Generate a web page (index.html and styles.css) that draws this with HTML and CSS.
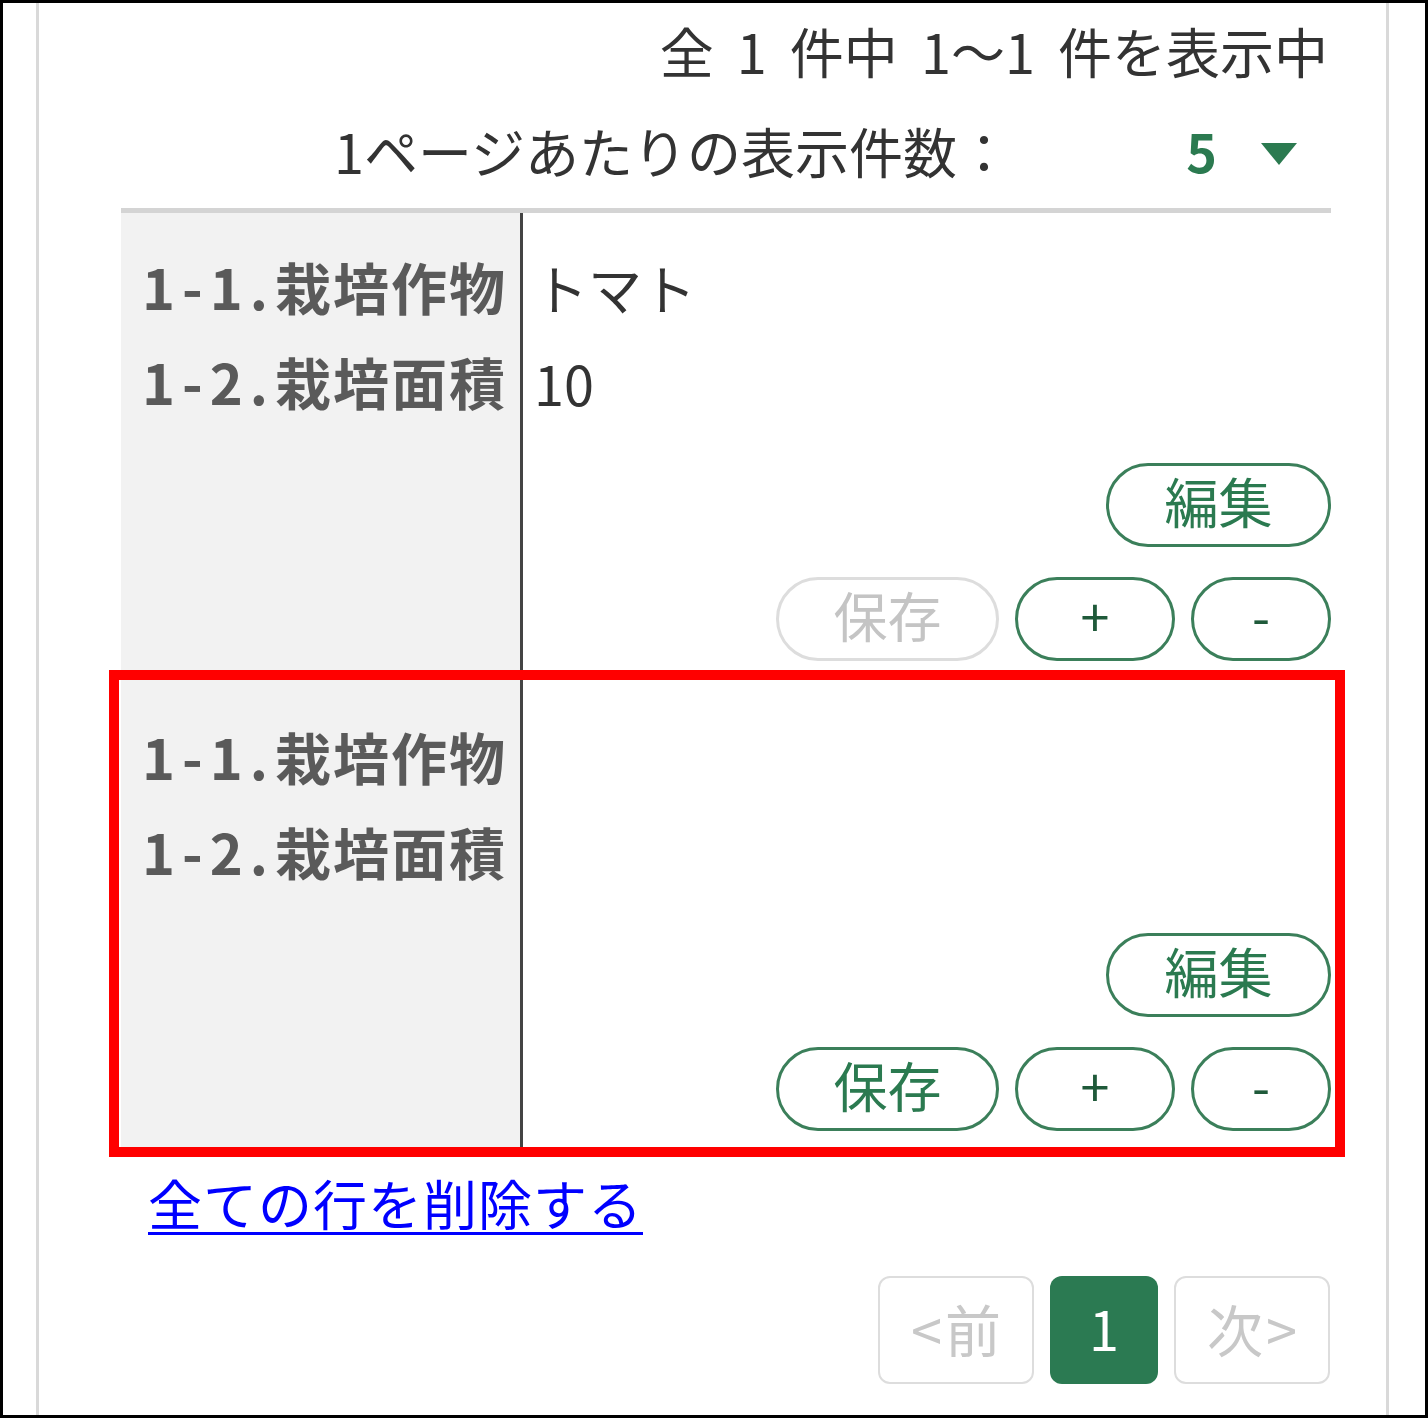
FILE: index.html
```html
<!DOCTYPE html>
<html lang="ja">
<head>
<meta charset="utf-8">
<title>栽培情報</title>
<link rel="stylesheet" href="styles.css">
</head>
<body>
<div class="frame">
  <div class="gutter"></div>
  <div class="panel">
    <div class="count">全 1 件中 1～1 件を表示中</div>
    <div class="perpage">
      <span class="perpage-label">1ページあたりの表示件数：</span>
      <div class="select">
        <span class="select-value">5</span>
        <span class="select-arrow"></span>
      </div>
    </div>
    <div class="table">
      <div class="row">
        <div class="labels">
          <div class="line"><span class="num">1-1.</span>栽培作物</div>
          <div class="line"><span class="num">1-2.</span>栽培面積</div>
        </div>
        <div class="values">
          <div class="line">トマト</div>
          <div class="line">10</div>
          <div class="actions">
            <div class="btn-row"><button class="btn btn-edit">編集</button></div>
            <div class="btn-row">
              <button class="btn btn-save is-disabled">保存</button>
              <button class="btn btn-add">+</button>
              <button class="btn btn-remove">-</button>
            </div>
          </div>
        </div>
      </div>
      <div class="row row-highlight">
        <div class="labels">
          <div class="line"><span class="num">1-1.</span>栽培作物</div>
          <div class="line"><span class="num">1-2.</span>栽培面積</div>
        </div>
        <div class="values">
          <div class="line"></div>
          <div class="line"></div>
          <div class="actions">
            <div class="btn-row"><button class="btn btn-edit">編集</button></div>
            <div class="btn-row">
              <button class="btn btn-save">保存</button>
              <button class="btn btn-add">+</button>
              <button class="btn btn-remove">-</button>
            </div>
          </div>
        </div>
        <div class="highlight"></div>
      </div>
    </div>
    <div class="delete-all"><a href="#">全ての行を削除する</a></div>
    <div class="pager">
      <span class="page page-nav">&lt;前</span>
      <span class="page page-current">1</span>
      <span class="page page-nav">次&gt;</span>
    </div>
  </div>
</div>
</body>
</html>
```

FILE: styles.css
```css
* { box-sizing: border-box; }

html, body {
  margin: 0;
  padding: 0;
  background: #ffffff;
}

body {
  font-family: "Noto Sans CJK JP", "Noto Sans", sans-serif;
  color: #333333;
}

.frame {
  width: 1428px;
  height: 1418px;
  border: 3px solid #000000;
  display: flex;
  overflow: hidden;
}

.gutter {
  width: 33px;
  flex: none;
}

.panel {
  width: 1353px;
  flex: none;
  border-left: 3px solid #d9d9d9;
  border-right: 3px solid #d9d9d9;
  padding: 0 55px 0 82px;
  display: flex;
  flex-direction: column;
}

.count {
  margin-top: 1px;
  height: 94px;
  line-height: 94px;
  font-size: 54px;
  word-spacing: 11px;
  text-align: right;
  padding-right: 3px;
  color: #333333;
  white-space: nowrap;
}

.perpage {
  height: 100px;
  display: flex;
  align-items: center;
  justify-content: flex-end;
  margin-top: 2px;
  margin-bottom: 8px;
  white-space: nowrap;
}

.perpage-label {
  font-size: 54px;
  color: #333333;
}

.select {
  width: 320px;
  display: flex;
  align-items: center;
  justify-content: flex-end;
  gap: 44px;
  padding-right: 34px;
}

.select-value {
  font-size: 52px;
  font-weight: 700;
  color: #2b7a50;
}

.select-arrow {
  width: 0;
  height: 0;
  border-left: 18px solid transparent;
  border-right: 18px solid transparent;
  border-top: 22px solid #2b7a50;
  margin-top: 8px;
}

.table {
  border-top: 5px solid #d4d4d4;
  display: flex;
  flex-direction: column;
}

.row {
  position: relative;
  height: 470px;
  display: flex;
}

.labels {
  width: 402px;
  flex: none;
  background: #f2f2f2;
  border-right: 3px solid #444444;
  padding: 25px 0 0 21px;
}

.labels .line {
  height: 95px;
  line-height: 95px;
  font-size: 56px;
  font-weight: 700;
  letter-spacing: 2px;
  color: #5a5a5a;
  white-space: nowrap;
}

.labels .num {
  letter-spacing: 7px;
}

.values {
  flex: 1;
  padding: 27px 0 0 11px;
  display: flex;
  flex-direction: column;
}

.values .line {
  height: 95px;
  line-height: 95px;
  font-size: 54px;
  color: #333333;
  white-space: nowrap;
}

.actions {
  margin-top: 33px;
  display: flex;
  flex-direction: column;
  gap: 30px;
}

.btn-row {
  display: flex;
  justify-content: flex-end;
  gap: 16px;
}

.btn {
  height: 84px;
  border: 3px solid #3b7f5a;
  border-radius: 42px;
  background: #ffffff;
  color: #2b7a50;
  font-family: "Noto Sans CJK JP", "Noto Sans", sans-serif;
  font-size: 54px;
  line-height: 1;
  padding: 0 0 8px 0;
  display: flex;
  align-items: center;
  justify-content: center;
}

.btn-edit { width: 225px; }
.btn-save { width: 223px; }
.btn-add { width: 160px; color: #1f5a3a; font-size: 52px; }
.btn-remove { width: 140px; color: #1f5a3a; font-size: 52px; }

.btn.is-disabled {
  border-color: #dddddd;
  color: #c4c4c4;
}

.highlight {
  position: absolute;
  top: -13px;
  left: -12px;
  right: -14px;
  bottom: -4px;
  border: 10px solid #ff0000;
  pointer-events: none;
}

.delete-all {
  margin-top: 3px;
  height: 94px;
  line-height: 94px;
  padding-left: 27px;
  font-size: 54px;
  letter-spacing: 1px;
}

.delete-all a {
  color: #0000ff;
  text-decoration: underline;
  text-decoration-thickness: 3px;
  text-underline-offset: 6px;
}

.pager {
  margin-top: 26px;
  display: flex;
  justify-content: flex-end;
  gap: 16px;
  padding-right: 1px;
}

.page {
  height: 108px;
  border-radius: 12px;
  display: flex;
  align-items: center;
  justify-content: center;
  font-size: 54px;
  padding-bottom: 6px;
}

.page-nav {
  width: 156px;
  border: 2px solid #dddddd;
  color: #c8c8c8;
  letter-spacing: 3px;
  padding-left: 3px;
  font-size: 56px;
}

.page-current {
  width: 108px;
  background: #2b7a52;
  color: #ffffff;
}
```
